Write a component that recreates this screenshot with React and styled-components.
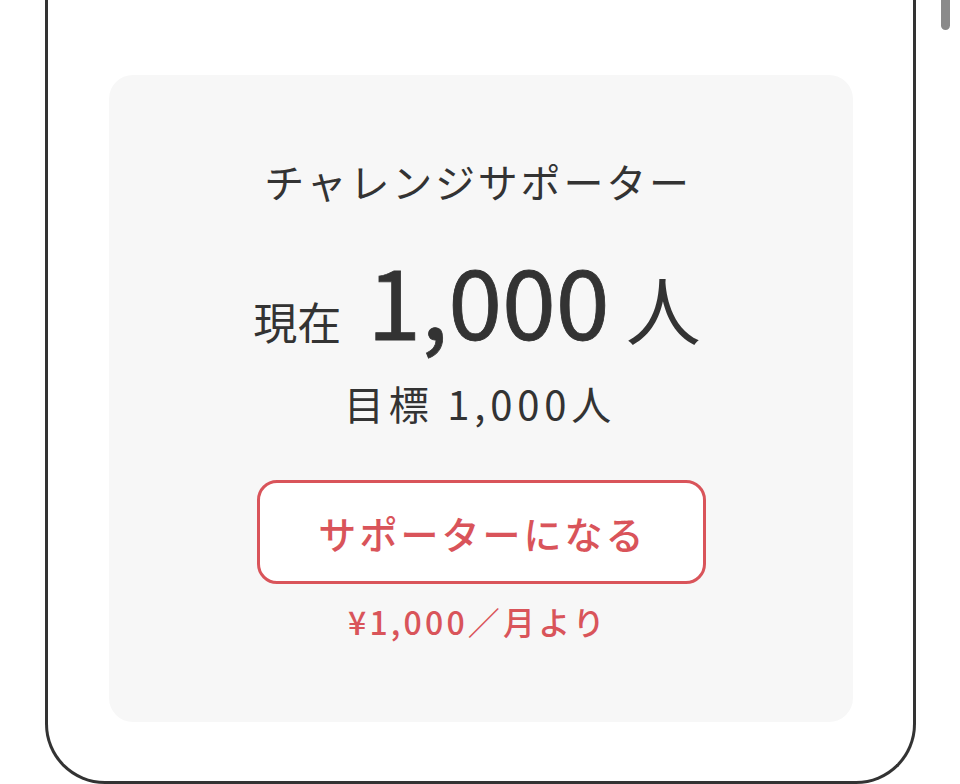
import React from "react";
import styled, { createGlobalStyle } from "styled-components";

const Global = createGlobalStyle`
  html, body { margin: 0; padding: 0; background: #fff; }
  body {
    font-family: "Noto Sans CJK JP", "Noto Sans", sans-serif;
    color: #333;
    overflow: hidden;
  }
`;

const Page = styled.div`
  position: relative;
  width: 960px;
  height: 784px;
  overflow: hidden;
  padding-left: 45px;
  box-sizing: border-box;
`;

const Card = styled.div`
  box-sizing: border-box;
  width: 871px;
  height: 784px;
  border: 3px solid #333;
  border-top: none;
  border-radius: 0 0 60px 60px;
  padding: 75px 60px 0 61px;
  background: #fff;
`;

const Panel = styled.div`
  box-sizing: border-box;
  width: 744px;
  height: 647px;
  background: #f7f7f7;
  border-radius: 24px;
  display: flex;
  flex-direction: column;
  align-items: center;
  padding-top: 80px;
`;

const Title = styled.div`
  font-size: 40px;
  line-height: 52px;
  letter-spacing: 0.07em;
  font-weight: 400;
  padding-right: 6px;
`;

const CurrentRow = styled.div`
  display: flex;
  align-items: baseline;
  margin-top: 42px;
  padding-right: 8px;
  line-height: 1;
  font-weight: 400;
`;

const Label = styled.span`
  font-size: ${(p) => p.$size}px;
  margin-right: ${(p) => p.$gap || 0}px;
`;

const BigNumber = styled.span`
  font-size: 97px;
  font-weight: 400;
  -webkit-text-stroke: 0.8px #333;
  margin-right: 16px;
`;

const Goal = styled.div`
  margin-top: 31px;
  font-size: 40px;
  line-height: 52px;
  letter-spacing: 0.12em;
  font-weight: 400;
  padding-right: 2px;
`;

const SupportButton = styled.button`
  box-sizing: border-box;
  margin-top: 51px;
  width: 449px;
  height: 104px;
  border: 3px solid #d9545a;
  border-radius: 20px;
  background: #fff;
  color: #d9545a;
  font-family: inherit;
  font-size: 38px;
  font-weight: 500;
  letter-spacing: 0.08em;
  padding: 0 0 0 0.08em;
  cursor: pointer;
`;

const Price = styled.div`
  margin-top: 17px;
  color: #d9545a;
  font-size: 32px;
  line-height: 40px;
  font-weight: 500;
  letter-spacing: 0.1em;
  padding-right: 6px;
`;

const ScrollThumb = styled.div`
  position: absolute;
  top: -10px;
  left: 941px;
  width: 9px;
  height: 40px;
  background: #8a8a8a;
  border-radius: 5px;
`;

export default function App() {
  return (
    <>
      <Global />
      <Page>
        <Card>
          <Panel>
            <Title>チャレンジサポーター</Title>
            <CurrentRow>
              <Label $size={44} $gap={26}>現在</Label>
              <BigNumber>1,000</BigNumber>
              <Label $size={75}>人</Label>
            </CurrentRow>
            <Goal>目標 1,000人</Goal>
            <SupportButton>サポーターになる</SupportButton>
            <Price>¥1,000／月より</Price>
          </Panel>
        </Card>
        <ScrollThumb />
      </Page>
    </>
  );
}
